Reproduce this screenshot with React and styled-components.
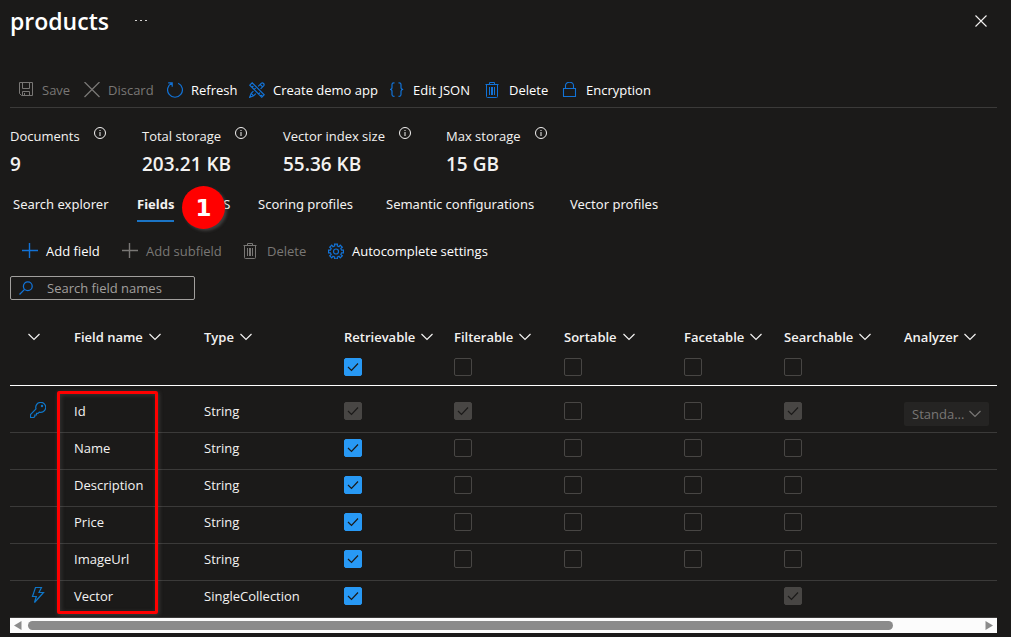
import React from "react";
import styled, { createGlobalStyle } from "styled-components";

const color = {
  page: "#1b1a19",
  text: "#f3f2f1",
  muted: "#797775",
  blue: "#1272d6",
  check: "#2899f5",
  line: "#3b3a39",
  disabled: "#484644",
};

const GlobalStyle = createGlobalStyle`
  *, *::before, *::after { box-sizing: border-box; }
  body {
    margin: 0;
    background: ${color.page};
    color: ${color.text};
    font: 13px/18px "Open Sans", "Noto Sans", sans-serif;
  }
  button, input, select { font: inherit; color: inherit; margin: 0; }
`;

const Page = styled.main`
  padding: 0 14px 4px 10px;
`;

const TitleBar = styled.header`
  display: flex;
  align-items: center;
  height: 42px;
`;

const Title = styled.h1`
  margin: 0;
  font-size: 23px;
  line-height: 32px;
  font-weight: 600;
  color: #ffffff;
`;

const PlainButton = styled.button`
  display: flex;
  align-items: center;
  justify-content: center;
  padding: 0;
  border: 0;
  background: none;
  font-weight: inherit;
  white-space: nowrap;
`;

const MoreButton = styled(PlainButton)`
  width: 16px;
  height: 16px;
  margin-left: 24px;
`;

const CloseButton = styled(PlainButton)`
  width: 16px;
  height: 16px;
  margin: 0 8px 0 auto;
`;

const CommandBar = styled.div`
  display: grid;
  grid-template-columns: ${(p) => p.$columns};
  align-items: center;
  padding: ${(p) => p.$padding};
`;

const TopCommands = styled(CommandBar)`
  margin-top: 30px;
  height: 36px;
  border-bottom: 1px solid ${color.line};
`;

const Command = styled(PlainButton)`
  justify-content: flex-start;
  gap: 8px;
  color: #ffffff;

  svg {
    flex: none;
    color: ${color.blue};
  }

  &:disabled,
  &:disabled svg {
    color: ${color.muted};
  }
`;

const Stats = styled.dl`
  display: grid;
  grid-template-columns: 132px 141px 163px 1fr;
  margin: 0;
  padding-top: 16px;
`;

const StatLabel = styled.dt`
  display: flex;
  gap: 14px;
  line-height: 24px;

  svg {
    margin-top: 3px;
  }
`;

const StatValue = styled.dd`
  margin: 0;
  font-size: 19px;
  line-height: 32px;
  font-weight: 600;
`;

const Tabs = styled.nav`
  position: relative;
  display: grid;
  grid-template-columns: 124px 60px 61px 128px 184px 1fr;
  padding: 12px 0 0 3px;
  font-family: "Noto Sans", sans-serif;
`;

const Tab = styled.a`
  justify-self: start;
  height: 30px;
  line-height: 24px;
  color: ${color.text};
  font-weight: ${(p) => (p.$active ? 700 : 400)};
  border-bottom: 2px solid ${(p) => (p.$active ? "#1b74c5" : "transparent")};
  text-decoration: none;
  white-space: nowrap;
`;

const StepBadge = styled.span`
  position: absolute;
  left: 172px;
  top: 6px;
  width: 43px;
  height: 43px;
  border-radius: 50%;
  background: #ff0000;
  box-shadow: 2px 2px 3px rgba(120, 120, 120, 0.4);
  color: #ffffff;
  font-family: "DejaVu Sans", sans-serif;
  font-size: 23px;
  line-height: 45px;
  font-weight: 700;
  text-align: center;
`;

const FieldCommands = styled(CommandBar)`
  margin-top: 12px;
  height: 34px;
`;

const SearchBox = styled.label`
  display: flex;
  align-items: center;
  gap: 14px;
  width: 185px;
  height: 24px;
  margin-top: 8px;
  padding: 0 8px;
  border: 1px solid #a19f9d;
  border-radius: 2px;

  svg {
    flex: none;
    color: ${color.blue};
  }
`;

const SearchInput = styled.input`
  width: 100%;
  min-width: 0;
  padding: 0;
  border: 0;
  outline: 0;
  background: none;

  &::placeholder {
    color: #a19f9d;
    opacity: 1;
  }
`;

const GridArea = styled.section`
  position: relative;
  margin-top: 16px;
`;

const Table = styled.table`
  width: 100%;
  table-layout: fixed;
  border-collapse: separate;
  border-spacing: 0;
`;

const HeadCell = styled.th`
  width: ${(p) => (p.$width ? `${p.$width}px` : "auto")};
  height: 70px;
  padding: 12px 0 0;
  border-bottom: 1px solid #ffffff;
  text-align: left;
  vertical-align: top;
  font-weight: 600;
`;

const SortButton = styled(PlainButton)`
  gap: 6px;
  height: 18px;
  margin: 0 0 12px ${(p) => (p.$indent ? "18px" : "0")};
`;

const Row = styled.tr`
  &:first-child td {
    padding-top: 16px;
  }
`;

const Cell = styled.td`
  height: 37px;
  padding: 6px 0;
  border-bottom: 1px solid ${color.line};
  vertical-align: top;
`;

const KindCell = styled(Cell)`
  color: #0f76c8;

  svg {
    display: block;
    margin-left: 20px;
  }
`;

const CheckFrame = styled.span`
  display: grid;
  width: 18px;
  height: 18px;

  > * {
    grid-area: 1 / 1;
  }

  svg {
    place-self: center;
    pointer-events: none;
    color: ${color.page};
    visibility: hidden;
  }

  input:checked + svg {
    visibility: visible;
  }
`;

const CheckInput = styled.input`
  appearance: none;
  width: 18px;
  height: 18px;
  border: 1px solid ${color.disabled};
  border-radius: 2px;

  &:checked {
    border-color: ${color.check};
    background: ${color.check};
  }

  &:checked:disabled {
    border-color: ${color.disabled};
    background: ${color.disabled};
  }
`;

const SelectFrame = styled.span`
  display: grid;
  width: 85px;
  height: 24px;

  > * {
    grid-area: 1 / 1;
  }

  svg {
    place-self: center end;
    margin-right: 8px;
    pointer-events: none;
    color: ${color.muted};
  }
`;

const AnalyzerSelect = styled.select`
  appearance: none;
  padding: 0 24px 0 8px;
  border: 0;
  border-radius: 2px;
  background: #252423;

  &:disabled {
    color: ${color.muted};
    opacity: 1;
  }
`;

const Highlight = styled.div`
  position: absolute;
  left: 47px;
  top: 75px;
  bottom: 19px;
  width: 101px;
  border: 3px solid #ff0000;
  border-radius: 2px;
  box-shadow: 1px 1px 4px rgba(120, 120, 120, 0.4), inset 1px 1px 4px rgba(120, 120, 120, 0.3);
  pointer-events: none;
`;

const ScrollBar = styled.div`
  display: flex;
  align-items: center;
  justify-content: space-between;
  height: 15px;
  padding: 0 4px;
  background: #fcfcfc;
  color: #8b8b8b;
`;

const ScrollTrack = styled.div`
  flex: 1;
  margin: 0 6px;
`;

const ScrollThumb = styled.div`
  width: 91%;
  height: 9px;
  border-radius: 5px;
  background: #8b8b8b;
`;

function Icon({ size = 16, width, height, box, children, stroke = 1 }) {
  const w = width || size;
  const h = height || size;
  return (
    <svg width={w} height={h} viewBox={box || `0 0 ${w} ${h}`} fill="none" stroke="currentColor" strokeWidth={stroke} aria-hidden="true">
      {children}
    </svg>
  );
}

const SaveIcon = () => (
  <Icon>
    <path d="M1.5 .5H14.5V13.5H3.5L1.5 11.5ZM4.5 .5V6.5H11.5V.5M4.5 13.5V9.5H11.5V13.5M6.5 11V13.5" />
  </Icon>
);
const CrossIcon = () => (
  <Icon stroke={1.3}>
    <path d="M.5 0L15.5 15M15.5 0L.5 15" />
  </Icon>
);
const RefreshIcon = () => (
  <Icon stroke={1.2}>
    <path d="M4.8 1.2A7.4 7.4 0 1 0 11.2 1.2M1.2 .8H5.2V4.8" />
  </Icon>
);
const DesignIcon = () => (
  <Icon stroke={1.2}>
    <path d="M.8 3.2L3.2 .8L15.2 12.8L12.8 15.2ZM3 5.4L4.4 4M5.2 7.6L6.6 6.2M9.6 12L11 10.6M11.8 14.2L13.2 12.8" />
    <path d="M9.2 4.4L12.2 1.4A1.7 1.7 0 0 1 14.6 3.8L11.6 6.8M6.8 11.6L4.6 13.8L.7 15.3L2.2 11.4L4.4 9.2M2.2 11.4L4.6 13.8M11.2 2.4L13.6 4.8" />
  </Icon>
);
const BracesIcon = () => (
  <Icon stroke={1.2}>
    <path d="M5.5 .8H4.8Q3 .8 3 2.6V5.6Q3 7.5 1 7.5Q3 7.5 3 9.4V12.6Q3 14.4 4.8 14.4H5.5M9.5 .8H10.2Q12 .8 12 2.6V5.6Q12 7.5 14.2 7.5Q12 7.5 12 9.4V12.6Q12 14.4 10.2 14.4H9.5" />
  </Icon>
);
const TrashIcon = () => (
  <Icon>
    <path d="M.5 2.5H13.5M4.5 2.5V.5H9.5V2.5M1.5 2.5V14.5Q1.5 15.5 2.5 15.5H11.5Q12.5 15.5 12.5 14.5V2.5M4.5 5V13M6.5 5V13M7.5 5V13M9.5 5V13" />
  </Icon>
);
const LockIcon = () => (
  <Icon stroke={1.1}>
    <path d="M1.5 6.5H13.5V14.5H1.5ZM3.5 6.5V3.6A4 3.4 0 0 1 11.5 3.6V6.5" />
  </Icon>
);
const PlusIcon = () => (
  <Icon stroke={1.4}>
    <path d="M7.5 0V15M0 7.5H16" />
  </Icon>
);
const teeth = Array.from({ length: 8 }, (_, i) => {
  const at = (r, deg) => {
    const a = ((i * 45 + deg) * Math.PI) / 180;
    return `${(8 + r * Math.cos(a)).toFixed(2)} ${(7.5 + r * Math.sin(a)).toFixed(2)}`;
  };
  return `${i ? "L" : "M"}${at(5.7, -13)}L${at(7.6, -11)}L${at(7.6, 11)}L${at(5.7, 13)}`;
}).join("");
const GearIcon = () => (
  <Icon stroke={1.2} box="0 -1 16 16">
    <path d={`${teeth}Z`} />
    <circle cx="8" cy="7.5" r="2.5" />
  </Icon>
);
const SearchIcon = () => (
  <Icon width={14} height={14} stroke={1.3}>
    <circle cx="8.8" cy="5.2" r="4.4" />
    <path d="M5.6 8.4L.5 13.5" />
  </Icon>
);
const InfoIcon = () => (
  <Icon size={12}>
    <circle cx="6" cy="6" r="5.5" />
    <path d="M6 5V9M6 3V4" />
  </Icon>
);
const ChevronIcon = () => (
  <Icon width={12} height={8} stroke={1.2}>
    <path d="M.5 1L6 6.5L11.5 1" />
  </Icon>
);
const CheckIcon = () => (
  <Icon width={12} height={10} stroke={1.2}>
    <path d="M1 5L4.5 8.5L11 1.5" />
  </Icon>
);
const KeyIcon = () => (
  <Icon stroke={1.2}>
    <path d="M6 6.9A5 5 0 1 1 9.2 10.1L8 11.3H6.5V13H4.8V14.5L3.8 15.5H.5V12.5Z" />
    <circle cx="12" cy="4" r=".6" />
  </Icon>
);
const BoltIcon = () => (
  <Icon stroke={1.2}>
    <path d="M5.5 .5H11.5L9 5.5H13.5L4.5 15.5L6.3 9.5H2.5Z" />
  </Icon>
);

const topCommands = [
  ["Save", SaveIcon, true],
  ["Discard", CrossIcon, true],
  ["Refresh", RefreshIcon],
  ["Create demo app", DesignIcon],
  ["Edit JSON", BracesIcon],
  ["Delete", TrashIcon],
  ["Encryption", LockIcon],
];

const fieldCommands = [
  ["Add field", PlusIcon],
  ["Add subfield", PlusIcon, true],
  ["Delete", TrashIcon, true],
  ["Autocomplete settings", GearIcon],
];

const stats = [
  ["Documents", "9"],
  ["Total storage", "203.21 KB"],
  ["Vector index size", "55.36 KB"],
  ["Max storage", "15 GB"],
];

const tabs = ["Search explorer", "Fields", "CORS", "Scoring profiles", "Semantic configurations", "Vector profiles"];

const flags = ["Retrievable", "Filterable", "Sortable", "Facetable", "Searchable"];

const columns = [
  { label: "", width: 64 },
  { label: "Field name", width: 130 },
  { label: "Type", width: 140 },
  { label: "Retrievable", width: 110, all: "on" },
  { label: "Filterable", width: 110, all: "off" },
  { label: "Sortable", width: 120, all: "off" },
  { label: "Facetable", width: 100, all: "off" },
  { label: "Searchable", width: 120, all: "off" },
  { label: "Analyzer" },
];

const plain = ["on", "off", "off", "off", "off"];
const fields = [
  { name: "Id", type: "String", icon: KeyIcon, flags: ["locked", "locked", "off", "off", "locked"], analyzer: "Standa..." },
  { name: "Name", type: "String", flags: plain },
  { name: "Description", type: "String", flags: plain },
  { name: "Price", type: "String", flags: plain },
  { name: "ImageUrl", type: "String", flags: plain },
  { name: "Vector", type: "SingleCollection", icon: BoltIcon, flags: ["on", null, null, null, "locked"] },
];

function Commands({ items }) {
  return items.map(([label, Glyph, disabled]) => (
    <Command key={label} type="button" disabled={disabled}>
      <Glyph />
      {label}
    </Command>
  ));
}

function Check({ state, label }) {
  return (
    <CheckFrame>
      <CheckInput type="checkbox" aria-label={label} defaultChecked={state !== "off"} disabled={state === "locked"} />
      <CheckIcon />
    </CheckFrame>
  );
}

export default function App() {
  return (
    <Page>
      <GlobalStyle />
      <TitleBar>
        <Title>products</Title>
        <MoreButton type="button" aria-label="More">
          <Icon width={12} height={2} stroke={0}>
            <path fill="#d2d0ce" d="M0 0h2v1H0ZM5 0h2v1H5ZM10 0h2v1h-2Z" />
          </Icon>
        </MoreButton>
        <CloseButton type="button" aria-label="Close">
          <Icon size={12} stroke={1.1}>
            <path d="M.5 .5L11.5 11.5M11.5 .5L.5 11.5" />
          </Icon>
        </CloseButton>
      </TitleBar>

      <TopCommands $columns="66px 83px 82px 140px 96px 77px 1fr" $padding="0 0 0 8px">
        <Commands items={topCommands} />
      </TopCommands>

      <Stats>
        {stats.map(([label, value]) => (
          <div key={label}>
            <StatLabel>
              {label}
              <InfoIcon />
            </StatLabel>
            <StatValue>{value}</StatValue>
          </div>
        ))}
      </Stats>

      <Tabs>
        {tabs.map((tab) => (
          <Tab key={tab} href="#" $active={tab === "Fields"}>
            {tab}
          </Tab>
        ))}
        <StepBadge>1</StepBadge>
      </Tabs>

      <FieldCommands $columns="100px 121px 85px 1fr" $padding="0 0 0 12px">
        <Commands items={fieldCommands} />
      </FieldCommands>

      <SearchBox>
        <SearchIcon />
        <SearchInput type="text" placeholder="Search field names" aria-label="Search field names" />
      </SearchBox>

      <GridArea>
        <Table>
          <thead>
            <tr>
              {columns.map(({ label, width, all }) => (
                <HeadCell key={label} $width={width}>
                  <SortButton type="button" aria-label={label || "Field kind"} $indent={!label}>
                    {label}
                    <ChevronIcon />
                  </SortButton>
                  {all && <Check state={all} label={`${label} for all fields`} />}
                </HeadCell>
              ))}
            </tr>
          </thead>
          <tbody>
            {fields.map(({ name, type, icon: Glyph, flags: states, analyzer }) => (
              <Row key={name}>
                <KindCell>{Glyph && <Glyph />}</KindCell>
                <Cell>{name}</Cell>
                <Cell>{type}</Cell>
                {states.map((state, i) => (
                  <Cell key={flags[i]}>{state && <Check state={state} label={`${name} ${flags[i]}`} />}</Cell>
                ))}
                <Cell>
                  {analyzer && (
                    <SelectFrame>
                      <AnalyzerSelect aria-label={`${name} analyzer`} disabled>
                        <option>{analyzer}</option>
                      </AnalyzerSelect>
                      <ChevronIcon />
                    </SelectFrame>
                  )}
                </Cell>
              </Row>
            ))}
          </tbody>
        </Table>
        <ScrollBar>
          <Icon width={8} height={9} stroke={0}>
            <path fill="currentColor" d="M7.5 0V9L0 4.5Z" />
          </Icon>
          <ScrollTrack>
            <ScrollThumb />
          </ScrollTrack>
          <Icon width={8} height={9} stroke={0}>
            <path fill="currentColor" d="M.5 0V9L8 4.5Z" />
          </Icon>
        </ScrollBar>
        <Highlight />
      </GridArea>
    </Page>
  );
}
